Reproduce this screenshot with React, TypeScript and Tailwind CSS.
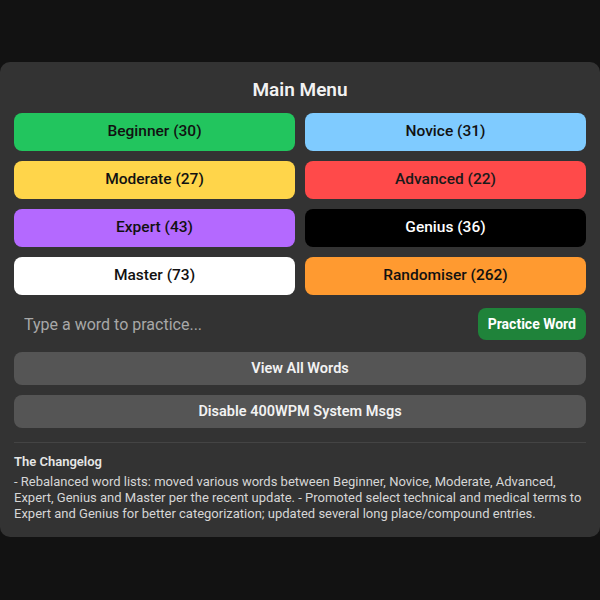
import { useState } from "react";

interface Level {
  label: string;
  count: number;
  className: string;
}

const levels: Level[] = [
  { label: "Beginner", count: 30, className: "bg-[#22c55e] text-[#111]" },
  { label: "Novice", count: 31, className: "bg-[#7fcbff] text-[#111]" },
  { label: "Moderate", count: 27, className: "bg-[#ffd54a] text-[#111]" },
  { label: "Advanced", count: 22, className: "bg-[#ff4a4a] text-[#1a1a1a]" },
  { label: "Expert", count: 43, className: "bg-[#b469ff] text-[#111]" },
  { label: "Genius", count: 36, className: "bg-black text-white" },
  { label: "Master", count: 73, className: "bg-white text-[#111]" },
  { label: "Randomiser", count: 262, className: "bg-[#ff9a30] text-[#111]" },
];

const App = () => {
  const [word, setWord] = useState("");

  return (
    <div className="min-h-screen bg-[#121212] pt-[62px] font-['Roboto',sans-serif]">
      <div className="w-[600px] rounded-[10px] bg-[#333333] px-[14px] pb-[15px] pt-[16px]">
        <h2 className="mb-[11px] text-center text-[19px] font-semibold leading-6 text-[#f2f2f2]">
          Main Menu
        </h2>

        <div className="grid grid-cols-2 gap-x-[10px] gap-y-[10px]">
          {levels.map((level) => (
            <button
              key={level.label}
              className={`h-[38px] rounded-[8px] text-[15.5px] font-medium ${level.className}`}
            >
              {level.label} ({level.count})
            </button>
          ))}
        </div>

        <div className="mt-[13px] flex items-center gap-2">
          <input
            value={word}
            onChange={(e) => setWord(e.target.value)}
            placeholder="Type a word to practice..."
            className="h-[32px] flex-1 bg-transparent px-[10px] text-[16px] text-white outline-none placeholder:text-[#a8a8a8]"
          />
          <button className="h-[32px] rounded-[8px] bg-[#1f833a] px-[10px] text-[14px] font-bold text-white">
            Practice Word
          </button>
        </div>

        <button className="mt-[12px] h-[33px] w-full rounded-[8px] bg-[#555555] text-[14.5px] font-semibold text-[#f2f2f2]">
          View All Words
        </button>
        <button className="mt-[10px] h-[33px] w-full rounded-[8px] bg-[#555555] text-[14.5px] font-semibold text-[#f2f2f2]">
          Disable 400WPM System Msgs
        </button>

        <div className="mt-[14px] border-t border-[#444444] pt-[11px]">
          <h3 className="text-[13px] font-semibold leading-4 text-[#e6e6e6]">The Changelog</h3>
          <p className="mt-[4px] text-[13px] leading-4 text-[#d6d6d6]">
            - Rebalanced word lists: moved various words between Beginner, Novice, Moderate,
            Advanced, Expert, Genius and Master per the recent update. - Promoted select technical
            and medical terms to Expert and Genius for better categorization; updated several long
            place/compound entries.
          </p>
        </div>
      </div>
    </div>
  );
};

export default App;
